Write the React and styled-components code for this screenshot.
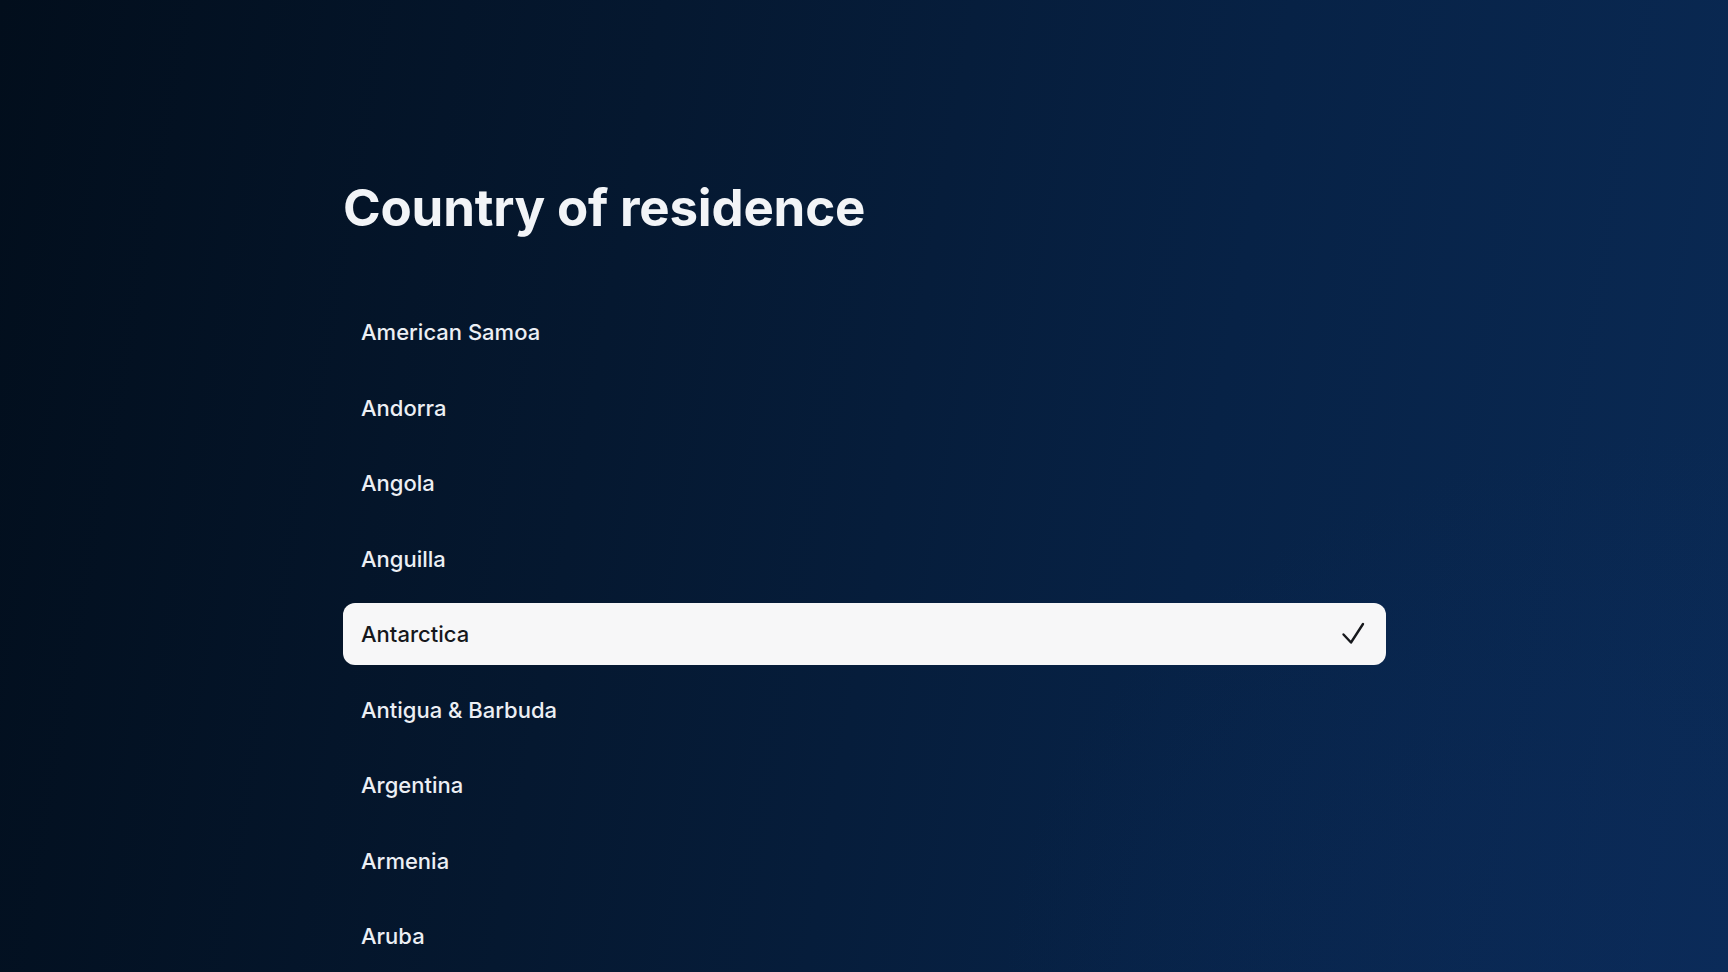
import React from "react";
import styled, { createGlobalStyle } from "styled-components";

const countries = [
  "American Samoa",
  "Andorra",
  "Angola",
  "Anguilla",
  "Antarctica",
  "Antigua & Barbuda",
  "Argentina",
  "Armenia",
  "Aruba",
];

const selectedCountry = "Antarctica";

const GlobalStyle = createGlobalStyle`
  html, body {
    margin: 0;
    padding: 0;
    height: 100%;
  }
  body {
    font-family: Inter, "Noto Sans", "Liberation Sans", sans-serif;
    background: #03111f;
  }
`;

const Screen = styled.div`
  width: 100%;
  height: 972px;
  overflow: hidden;
  box-sizing: border-box;
  padding: 182px 0 0 343px;
  background:
    radial-gradient(ellipse 60% 80% at 100% 100%, rgba(12, 44, 94, 0.45), rgba(12, 44, 94, 0) 70%),
    linear-gradient(100deg, #020e1c 0%, #051830 35%, #072246 68%, #0a2a55 100%);
`;

const Content = styled.div`
  width: 1043px;
  display: flex;
  flex-direction: column;
`;

const Title = styled.h1`
  margin: 0 0 68px;
  font-size: 51px;
  line-height: 1;
  font-weight: 700;
  letter-spacing: -0.2px;
  color: #f2f4f7;
`;

const List = styled.ul`
  list-style: none;
  margin: 0;
  padding: 0;
  display: flex;
  flex-direction: column;
  gap: 13.5px;
`;

const Row = styled.li`
  height: 62px;
  box-sizing: border-box;
  padding: 0 21px 0 18px;
  display: flex;
  align-items: center;
  justify-content: space-between;
  border-radius: 12px;
  font-size: 22px;
  font-weight: 500;
  color: ${(p) => (p.$selected ? "#16181c" : "#eceff4")};
  background: ${(p) => (p.$selected ? "#f7f7f8" : "transparent")};
`;

const Check = () => (
  <svg width="24" height="24" viewBox="0 0 24 24" fill="none">
    <path
      d="M2.5 12.5 L10 20.5 L22 2"
      stroke="#16181c"
      strokeWidth="2.4"
      strokeLinecap="round"
      strokeLinejoin="round"
    />
  </svg>
);

export default function App() {
  return (
    <>
      <GlobalStyle />
      <Screen>
        <Content>
          <Title>Country of residence</Title>
          <List>
            {countries.map((c) => (
              <Row key={c} $selected={c === selectedCountry}>
                <span>{c}</span>
                {c === selectedCountry && <Check />}
              </Row>
            ))}
          </List>
        </Content>
      </Screen>
    </>
  );
}
